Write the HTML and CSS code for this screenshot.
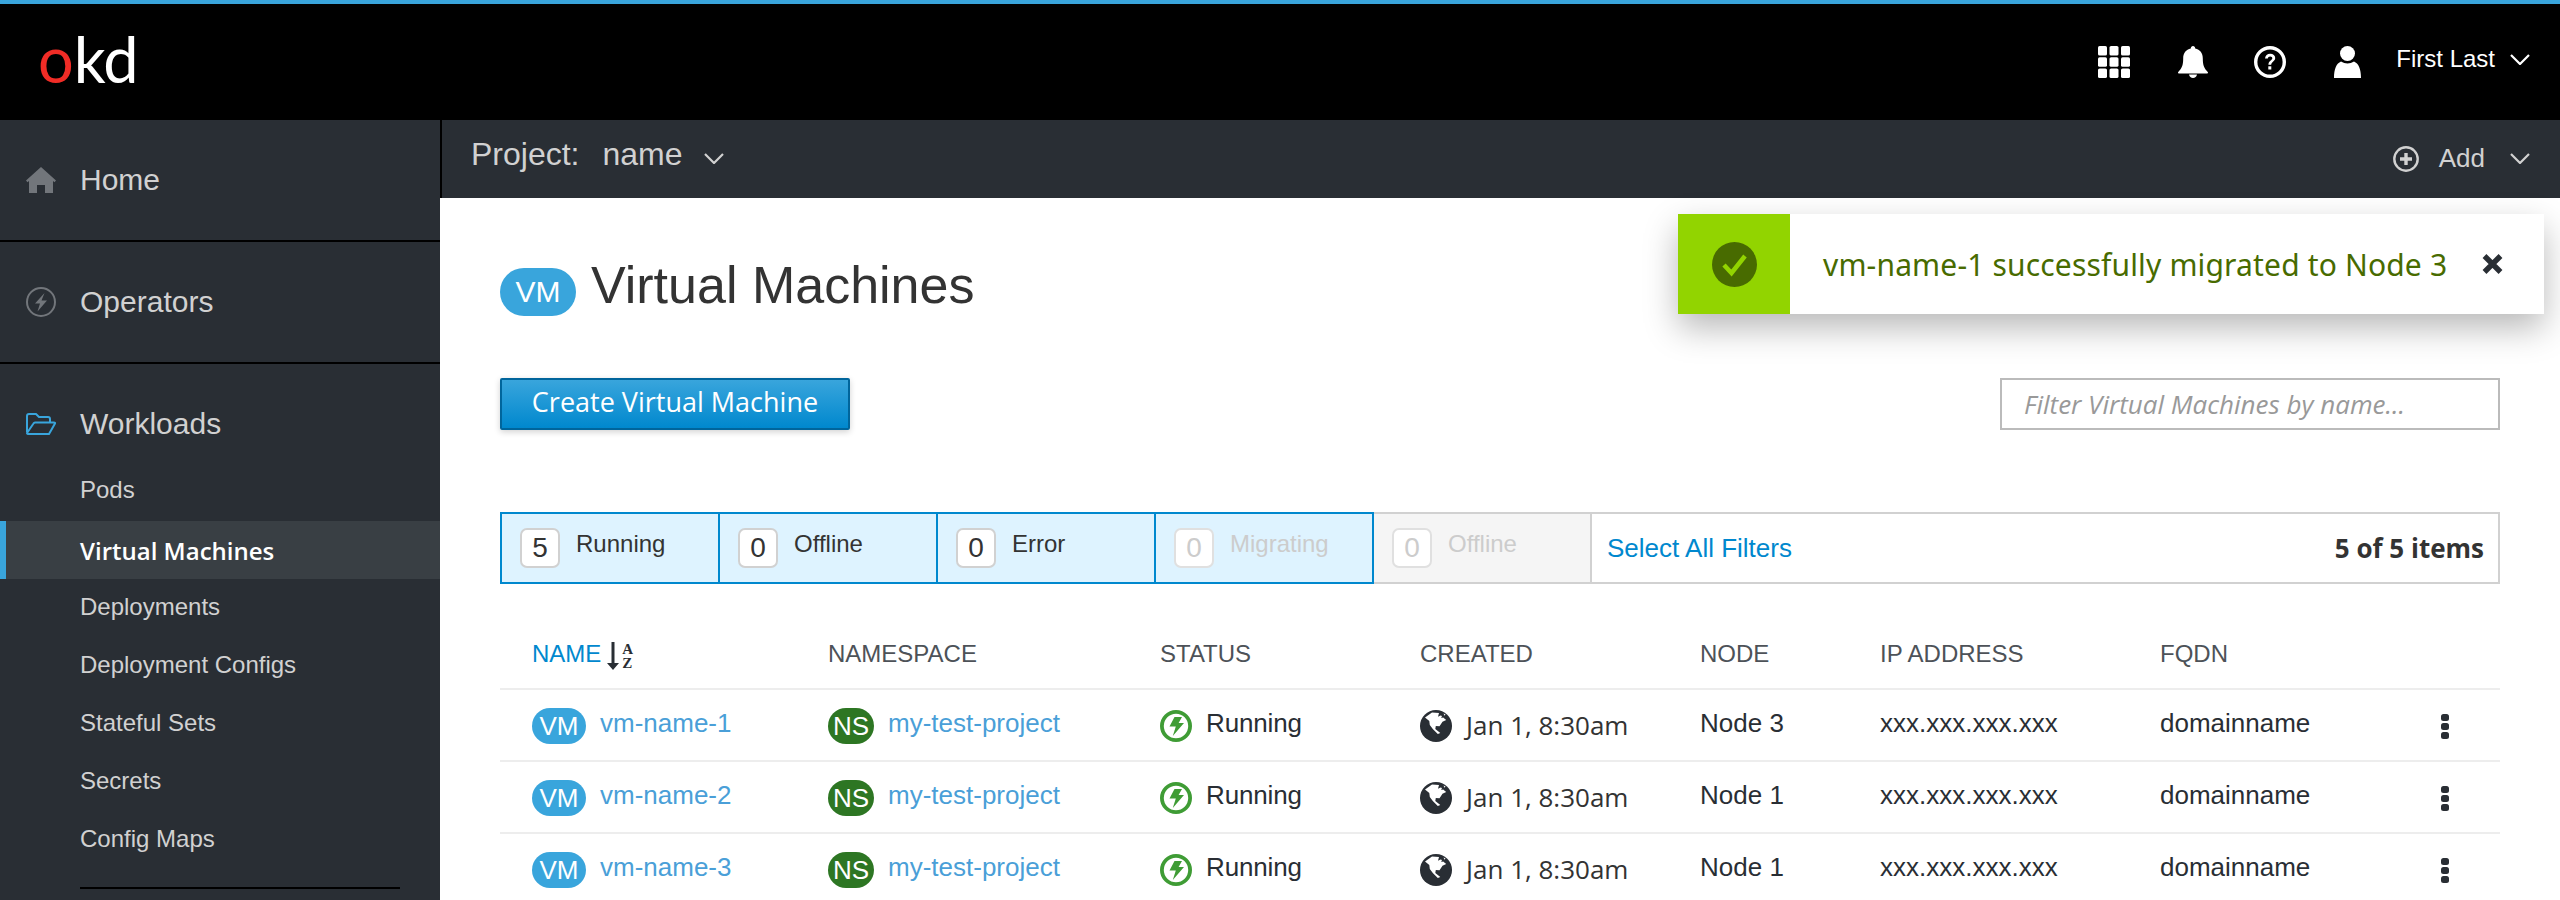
FILE: index.html
```html
<!DOCTYPE html>
<html lang="en">
<head>
<meta charset="utf-8">
<title>Virtual Machines</title>
<link rel="stylesheet" href="styles.css">
</head>
<body>
<svg class="defs" width="0" height="0" aria-hidden="true">
  <symbol id="i-chevron" viewBox="0 0 20 11"><path d="M1 1l9 9 9-9" fill="none" stroke="currentColor" stroke-width="2.2"/></symbol>
  <symbol id="i-bolt" viewBox="0 0 32 32"><circle cx="16" cy="16" r="14.100" fill="none" stroke="#3f9c35" stroke-width="3.800"/><path d="M14.500 7h7.500l-3.400 6h5.400L12.800 26l3-9.500H9.500z" fill="#3f9c35"/></symbol>
  <symbol id="i-globe" viewBox="0 0 32 32"><circle cx="16" cy="16" r="16" fill="#292e34"/><path d="M5 7.500L12 2.500l7 .5-1 3.800 2.500-1.300 1.500.5-.8 2 2-.5 3 2.500-3.700 1.800-3 4.500-3.700-.3-.5 3 5 4-2.500 1-5-5-3-4-.5-4zM23.500 3.500l2 1-1 1.300z" fill="#fff"/></symbol>
  <symbol id="i-kebab" viewBox="0 0 8 25"><rect width="8" height="7" rx="2.500" fill="#292e34"/><rect y="9" width="8" height="7" rx="2.500" fill="#292e34"/><rect y="18" width="8" height="7" rx="2.500" fill="#292e34"/></symbol>
</svg>

<header class="masthead">
  <div class="logo"><span class="logo-o">o</span>kd</div>
  <div class="mast-tools">
    <svg class="mast-icon" width="32" height="32" viewBox="0 0 32 32"><g fill="#fff"><rect width="9" height="9.600" rx="1.600"/><rect x="11.500" width="9" height="9.600" rx="1.600"/><rect x="23" width="9" height="9.600" rx="1.600"/><rect y="11.200" width="9" height="9.600" rx="1.600"/><rect x="11.500" y="11.200" width="9" height="9.600" rx="1.600"/><rect x="23" y="11.200" width="9" height="9.600" rx="1.600"/><rect y="22.400" width="9" height="9.600" rx="1.600"/><rect x="11.500" y="22.400" width="9" height="9.600" rx="1.600"/><rect x="23" y="22.400" width="9" height="9.600" rx="1.600"/></g></svg>
    <svg class="mast-icon" width="30" height="32" viewBox="0 0 30 32"><path d="M15 0c1.300 0 2.200 1 2.200 2.400 4.800 1 7.600 4.600 7.600 10 0 7 1.400 9.800 5.200 13.800 0 .8-.4 1.300-1.200 1.300H1.200C.4 27.500 0 27 0 26.200c3.800-4 5.200-6.800 5.200-13.800 0-5.400 2.800-9 7.600-10C12.800 1 13.700 0 15 0z" fill="#fff"/><path d="M11 28.500h8c-.4 2.200-2 3.500-4 3.500s-3.600-1.300-4-3.500z" fill="#fff"/></svg>
    <svg class="mast-icon" width="32" height="32" viewBox="0 0 32 32"><circle cx="16" cy="16" r="14.300" fill="none" stroke="#fff" stroke-width="3.400"/><path d="M11 12.600c.3-3 2.300-4.800 5.200-4.800 3 0 5 1.800 5 4.300 0 3.500-4 3.700-4 6.700h-2.800c0-4.300 3.900-4.500 3.900-6.600 0-1-.8-1.800-2.100-1.800-1.400 0-2.200.8-2.400 2.200z" fill="#fff"/><rect x="14.300" y="20.300" width="3" height="3.200" fill="#fff"/></svg>
    <svg class="mast-icon" width="27" height="32" viewBox="0 0 27 32"><circle cx="13.500" cy="7.500" r="7.500" fill="#fff"/><path d="M7 15.500c4 2.500 9 2.500 13 0 4.500 2 7 7 7 16.500H0c0-9.500 2.500-14.500 7-16.500z" fill="#fff"/></svg>
    <span class="user-name">First Last</span>
    <svg class="chev"><use href="#i-chevron"/></svg>
  </div>
</header>

<div class="shell">
  <nav class="sidebar">
    <section class="nav-top">
      <svg class="nav-icon" width="30" height="26" viewBox="0 0 30 26"><path d="M15 0l15 13.500-1.500 1.800-1.500-1.200V26h-8v-8h-8v8H3V14.100l-1.500 1.200L0 13.500z" fill="#72767b"/></svg>
      <span>Home</span>
    </section>
    <section class="nav-top">
      <svg class="nav-icon" width="30" height="30" viewBox="0 0 30 30"><circle cx="15" cy="15" r="14" fill="none" stroke="#72767b" stroke-width="2"/><path d="M18.500 6L9 16.500h5l-2.500 8L21 13.500h-5.500z" fill="#72767b"/></svg>
      <span>Operators</span>
    </section>
    <section class="nav-group">
      <div class="nav-head">
        <svg class="nav-icon" width="30" height="22" viewBox="0 0 30 22"><path d="M1 19V3q0-2 2-2h7l3 3h9q2 0 2 2v3M1 20q0 1 2 1h20l6-10.500q.3-1-1-1H9q-1 0-1.500 1L1 20z" fill="none" stroke="#39a5dc" stroke-width="2" stroke-linejoin="round"/></svg>
        <span>Workloads</span>
      </div>
      <a class="nav-item">Pods</a>
      <a class="nav-item nav-item-active">Virtual Machines</a>
      <a class="nav-item nav-item-after">Deployments</a>
      <a class="nav-item">Deployment Configs</a>
      <a class="nav-item">Stateful Sets</a>
      <a class="nav-item">Secrets</a>
      <a class="nav-item">Config Maps</a>
      <div class="nav-rule"></div>
    </section>
  </nav>

  <main class="main">
    <div class="subnav">
      <div class="project"><span class="project-label">Project:</span><span>name</span><svg class="chev"><use href="#i-chevron"/></svg></div>
      <div class="add">
        <svg width="26" height="26" viewBox="0 0 26 26"><circle cx="13" cy="13" r="11.700" fill="none" stroke="#d1d1d1" stroke-width="2.400"/><path d="M11.300 7h3.400v4.300H19v3.400h-4.300V19h-3.400v-4.300H7v-3.400h4.300z" fill="#d1d1d1"/></svg>
        <span>Add</span>
        <svg class="chev"><use href="#i-chevron"/></svg>
      </div>
    </div>

    <div class="content">
      <div class="title-row">
        <span class="badge badge-title">VM</span>
        <h1>Virtual Machines</h1>
      </div>
      <div class="action-row">
        <button class="btn-primary">Create Virtual Machine</button>
        <input class="filter-input" placeholder="Filter Virtual Machines by name...">
      </div>

      <div class="filter-bar">
        <div class="chip chip-on"><span class="count">5</span><span class="chip-label">Running</span></div>
        <div class="chip chip-on"><span class="count">0</span><span class="chip-label">Offline</span></div>
        <div class="chip chip-on"><span class="count">0</span><span class="chip-label">Error</span></div>
        <div class="chip chip-on chip-muted"><span class="count">0</span><span class="chip-label">Migrating</span></div>
        <div class="chip chip-off chip-muted"><span class="count">0</span><span class="chip-label">Offline</span></div>
        <div class="filter-tail">
          <a class="select-all">Select All Filters</a>
          <span class="items">5 of 5 items</span>
        </div>
      </div>

      <div class="vm-table">
        <div class="vm-row vm-head">
          <div class="th-sort">NAME
            <svg class="sort-arrow" width="12" height="28" viewBox="0 0 12 28"><path d="M4.500 0h3v21H12l-6 7-6-7h4.500z" fill="#292e34"/></svg>
            <span class="sort-az"><span>A</span><span>Z</span></span>
          </div>
          <div>NAMESPACE</div><div>STATUS</div><div>CREATED</div><div>NODE</div><div>IP ADDRESS</div><div>FQDN</div><div></div>
        </div>

        <div class="vm-row">
          <div class="cell"><span class="badge badge-vm">VM</span><a>vm-name-1</a></div>
          <div class="cell"><span class="badge badge-ns">NS</span><a>my-test-project</a></div>
          <div class="cell status"><svg class="cell-icon"><use href="#i-bolt"/></svg>Running</div>
          <div class="cell"><svg class="cell-icon"><use href="#i-globe"/></svg><span class="date">Jan 1, 8:30am</span></div>
          <div>Node 3</div><div>xxx.xxx.xxx.xxx</div><div>domainname</div>
          <div><svg class="kebab"><use href="#i-kebab"/></svg></div>
        </div>
        <div class="vm-row">
          <div class="cell"><span class="badge badge-vm">VM</span><a>vm-name-2</a></div>
          <div class="cell"><span class="badge badge-ns">NS</span><a>my-test-project</a></div>
          <div class="cell status"><svg class="cell-icon"><use href="#i-bolt"/></svg>Running</div>
          <div class="cell"><svg class="cell-icon"><use href="#i-globe"/></svg><span class="date">Jan 1, 8:30am</span></div>
          <div>Node 1</div><div>xxx.xxx.xxx.xxx</div><div>domainname</div>
          <div><svg class="kebab"><use href="#i-kebab"/></svg></div>
        </div>
        <div class="vm-row">
          <div class="cell"><span class="badge badge-vm">VM</span><a>vm-name-3</a></div>
          <div class="cell"><span class="badge badge-ns">NS</span><a>my-test-project</a></div>
          <div class="cell status"><svg class="cell-icon"><use href="#i-bolt"/></svg>Running</div>
          <div class="cell"><svg class="cell-icon"><use href="#i-globe"/></svg><span class="date">Jan 1, 8:30am</span></div>
          <div>Node 1</div><div>xxx.xxx.xxx.xxx</div><div>domainname</div>
          <div><svg class="kebab"><use href="#i-kebab"/></svg></div>
        </div>
      </div>
    </div>
  </main>
</div>

<div class="toast">
  <div class="toast-flag">
    <svg width="45" height="45" viewBox="0 0 45 45"><circle cx="22.500" cy="22.500" r="22.500" fill="#486b00"/><path d="M12 23l7.500 8L33 14" fill="none" stroke="#92d400" stroke-width="4.500"/></svg>
  </div>
  <div class="toast-text">vm-name-1 successfully migrated to Node 3</div>
  <svg class="toast-close" width="21" height="20" viewBox="0 0 21 20"><path d="M2.500 2l16 16M18.500 2l-16 16" fill="none" stroke="#292e34" stroke-width="5.400"/></svg>
</div>
</body>
</html>
```
FILE: styles.css
```css
* { box-sizing: border-box; }
html, body { margin: 0; height: 900px; overflow: hidden; background: #fff; }
body { position: relative; font-family: "Liberation Sans", Arial, sans-serif; color: #292e34; }
.defs { position: absolute; }

.masthead {
  height: 120px;
  border-top: 4px solid #39a5dc;
  background: #000;
  display: flex;
  align-items: center;
  justify-content: space-between;
  padding: 0 30px 0 38px;
}
.logo {
  font-family: Lato, sans-serif;
  font-weight: 400;
  font-size: 63px;
  line-height: 64px;
  letter-spacing: -1px;
  color: #fff;
  margin-top: -6px;
}
.logo-o { color: #f12c26; letter-spacing: 0; }
.mast-tools { display: flex; align-items: center; color: #fff; }
.mast-icon { margin-right: 48px; flex: none; }
.mast-tools .mast-icon:nth-child(4) { margin-right: 35px; }
.mast-tools .mast-icon:nth-child(2) { margin-right: 46px; }
.user-name { font-size: 24px; margin-right: 15px; margin-top: -6px; }
.chev { width: 20px; height: 11px; flex: none; }
.mast-tools .chev { margin-top: -6px; }

.shell { display: flex; height: 780px; }
.sidebar { width: 440px; flex: none; background: #292e34; color: #d1d1d1; }
.nav-top {
  height: 122px;
  border-bottom: 2px solid #000;
  display: flex;
  align-items: center;
  font-size: 30px;
  position: relative;
}
.nav-top span, .nav-head span { position: absolute; left: 80px; }
.nav-icon { margin-left: 26px; flex: none; }
.nav-group { padding-top: 30px; }
.nav-head {
  height: 60px;
  margin-bottom: 7px;
  display: flex;
  align-items: center;
  font-size: 30px;
  position: relative;
}
.nav-item {
  display: flex;
  align-items: center;
  height: 58px;
  padding-left: 80px;
  font-size: 24px;
}
.nav-item-active {
  margin-top: 2px;
  background: #393f44;
  border-left: 6px solid #39a5dc;
  padding-left: 74px;
  color: #fff;
  font-family: "Open Sans", sans-serif;
  font-weight: 600;
  font-size: 24px;
}
.nav-item-after { margin-top: -1px; }
.nav-rule { margin: 19px 40px 0 80px; border-top: 2px solid #000; }

.main { flex: 1; min-width: 0; }
.subnav {
  height: 78px;
  background: #292e34;
  border-left: 2px solid #000;
  color: #d1d1d1;
  display: flex;
  align-items: center;
  justify-content: space-between;
  padding: 0 30px 0 29px;
  font-size: 32px;
}
.project { display: flex; align-items: center; margin-top: -10px; }
.project-label { margin-right: 23px; }
.project .chev { margin-left: 21px; margin-top: 9px; }
.add { display: flex; align-items: center; font-size: 26px; margin-top: -1px; }
.add svg:first-child { margin-left: 2px; }
.add span { margin: 0 25px 0 20px; }

.content { padding: 0 60px; }
.badge {
  display: inline-flex;
  align-items: center;
  justify-content: center;
  color: #fff;
  flex: none;
}
.badge-title { width: 76px; height: 48px; border-radius: 24px; background: #39a5dc; font-size: 30px; }
.badge-vm { width: 54px; height: 36px; border-radius: 18px; background: #39a5dc; font-size: 26px; margin-right: 14px; transform: translateY(3px); }
.badge-ns { width: 46px; height: 36px; border-radius: 18px; background: #2d7623; font-size: 26px; margin-right: 14px; transform: translateY(3px); }

.title-row { display: flex; align-items: center; height: 48px; margin-top: 70px; }
h1 { margin: -15px 0 0 15px; font-weight: 400; font-size: 52px; line-height: 60px; color: #333; height: 60px; }

.action-row { display: flex; justify-content: space-between; margin-top: 62px; }
.btn-primary {
  width: 350px;
  height: 52px;
  border: 2px solid #00659c;
  border-radius: 2px;
  background: linear-gradient(#39a5dc, #0088ce);
  color: #fff;
  font-family: "Open Sans", sans-serif;
  font-size: 27px;
  padding: 0 0 5px;
  box-shadow: 0 2px 6px rgba(0, 0, 0, .18);
}
.filter-input {
  width: 500px;
  height: 52px;
  border: 2px solid #bbb;
  padding: 0 22px;
  font-family: "Open Sans", sans-serif;
  font-size: 26px;
  font-style: italic;
  outline: none;
}
.filter-input::placeholder { color: #999; opacity: 1; }

.filter-bar { display: flex; height: 72px; margin-top: 82px; }
.chip {
  width: 220px;
  flex: none;
  display: flex;
  align-items: flex-start;
  padding: 14px 0 0 18px;
  margin-right: -2px;
  position: relative;
}
.chip-on { background: #def3ff; border: 2px solid #0088ce; z-index: 1; }
.chip-off { background: #f5f5f5; border: 2px solid #d1d1d1; }
.count {
  width: 40px;
  height: 40px;
  border: 2px solid #d1d1d1;
  border-radius: 7px;
  background: #fff;
  display: flex;
  align-items: center;
  justify-content: center;
  font-size: 28px;
  color: #333;
  flex: none;
}
.chip-label { font-size: 24px; margin: 2px 0 0 16px; color: #333; }
.chip-muted .count { border-color: #e0e0e0; color: #ccc; }
.chip-muted .chip-label { color: #ccc; }
.filter-tail {
  flex: 1;
  border: 2px solid #d1d1d1;
  display: flex;
  align-items: center;
  justify-content: space-between;
  padding: 0 14px 0 15px;
  font-size: 26px;
}
.select-all { color: #0088ce; }
.items { font-family: "Open Sans", sans-serif; font-weight: 700; font-size: 26px; color: #333; }

.vm-table { margin-top: 38px; }
.vm-row {
  display: grid;
  grid-template-columns: 328px 332px 260px 280px 180px 280px 280px 60px;
  align-items: center;
  height: 72px;
  padding-bottom: 4px;
  border-bottom: 2px solid #ededed;
  font-size: 26px;
  color: #292e34;
}
.vm-head { height: 68px; padding-bottom: 2px; font-size: 24px; color: #4d5258; }
.vm-row > div:first-child { padding-left: 32px; }
.vm-row a { color: #4a9fd8; }
.cell { display: flex; align-items: center; }
.status { letter-spacing: -.15px; }
.th-sort { color: #0088ce; display: flex; align-items: center; }
.sort-arrow { margin-left: 6px; flex: none; margin-top: 4px; }
.sort-az {
  display: flex;
  flex-direction: column;
  margin-left: 3px;
  margin-top: 4px;
  font-family: "Liberation Serif", serif;
  font-weight: 700;
  font-size: 15px;
  line-height: 14px;
  color: #292e34;
}
.cell-icon { width: 32px; height: 32px; margin-right: 14px; flex: none; transform: translateY(3px); }
.date { font-family: "Open Sans", sans-serif; font-size: 26px; color: #333; transform: translateY(2px); }
.kebab { width: 8px; height: 25px; display: block; margin-left: 1px; transform: translateY(3px); }

.toast {
  position: absolute;
  left: 1678px;
  top: 214px;
  width: 866px;
  height: 100px;
  background: #fff;
  display: flex;
  align-items: center;
  box-shadow: 0 14px 32px rgba(0, 0, 0, .28);
}
.toast-flag {
  width: 112px;
  height: 100px;
  background: #92d400;
  display: flex;
  align-items: center;
  justify-content: center;
}
.toast-text {
  margin-left: 33px;
  width: 626px;
  font-family: "Noto Sans", sans-serif;
  font-size: 30px;
  letter-spacing: .16px;
  color: #486b00;
  white-space: nowrap;
}
.toast-close { margin-left: 33px; }
```
